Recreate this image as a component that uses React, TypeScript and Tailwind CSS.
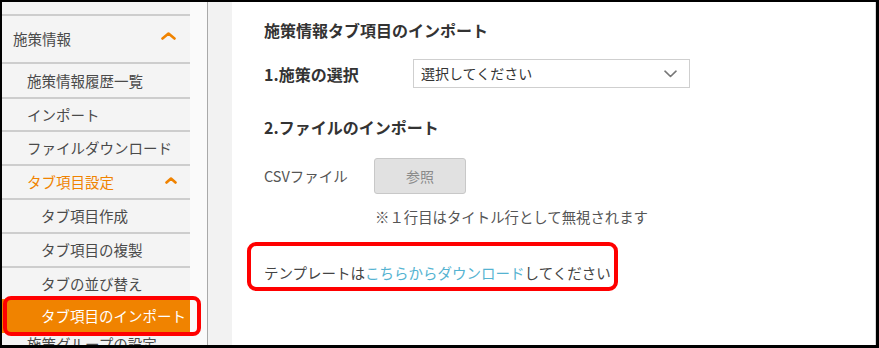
import React from "react";

const font = { fontFamily: '"Noto Sans CJK JP", "Noto Sans", sans-serif' };

function Chevron({ w, h }: { w: number; h: number }) {
  return (
    <svg width={w} height={h} viewBox={`0 0 ${w} ${h}`} fill="none">
      <polyline
        points={`1.5,${h - 1.5} ${w / 2},1.5 ${w - 1.5},${h - 1.5}`}
        stroke="#f08300"
        strokeWidth="2.6"
        strokeLinecap="round"
        strokeLinejoin="round"
      />
    </svg>
  );
}

export default function App() {
  return (
    <div
      className="relative box-border w-[879px] h-[348px] overflow-hidden border-black border-t-2 border-l-2 border-r-[3px] border-b-[3px] bg-white"
      style={font}
    >
      <div className="flex h-full">
        {/* Sidebar */}
        <div className="w-[188px] shrink-0 bg-[#f4f4f4] flex flex-col text-[14.5px] text-[#4a4a4a]">
          <div className="h-[14px] shrink-0 box-border border-b-2 border-[#cdcdcd]" />
          <div className="h-[48px] shrink-0 box-border border-b-2 border-[#cdcdcd] flex items-center justify-between pl-[11px] pr-[14px]">
            <span className="leading-none">施策情報</span>
            <span className="-mt-[7px]">
              <Chevron w={15} h={8} />
            </span>
          </div>
          <div className="h-[35px] shrink-0 box-border border-b-2 border-[#cdcdcd] flex items-center pl-[25px]">
            施策情報履歴一覧
          </div>
          <div className="h-[33px] shrink-0 box-border border-b-2 border-[#cdcdcd] flex items-center pl-[25px]">
            インポート
          </div>
          <div className="h-[34px] shrink-0 box-border border-b-2 border-[#cdcdcd] flex items-center pl-[25px]">
            ファイルダウンロード
          </div>
          <div className="h-[34px] shrink-0 box-border border-b-2 border-[#cdcdcd] flex items-center justify-between pl-[25px] pr-[13px] text-[#f08300]">
            <span>タブ項目設定</span>
            <span className="-mt-[4px]">
              <Chevron w={12} h={7} />
            </span>
          </div>
          <div className="h-[34px] shrink-0 box-border border-b-2 border-[#cdcdcd] flex items-center pl-[39px]">
            タブ項目作成
          </div>
          <div className="h-[34px] shrink-0 box-border border-b-2 border-[#cdcdcd] flex items-center pl-[39px]">
            タブ項目の複製
          </div>
          <div className="h-[31px] shrink-0 box-border flex items-center pl-[39px]">
            タブの並び替え
          </div>
          <div className="h-[34px] shrink-0 flex items-center pl-[39px] bg-[#f08300] text-white">
            タブ項目のインポート
          </div>
          <div className="h-[34px] shrink-0 flex items-start pl-[25px] pt-[1px] leading-[20px]">
            施策グループの設定
          </div>
        </div>
        <div className="w-[17px] shrink-0 bg-[#fafafa]" />
        <div className="w-px shrink-0 bg-[#a9a9a9]" />
        <div className="w-[24px] shrink-0 bg-[#f2f2f2]" />

        {/* Main */}
        <div className="flex-1 bg-white border-r border-[#d8d8d8] pl-[32px] pt-[16px] flex flex-col">
          <div className="h-[24px] flex items-center text-[16px] font-bold text-[#333]">
            施策情報タブ項目のインポート
          </div>
          <div className="mt-[17px] h-[29px] flex items-center">
            <div className="w-[149px] text-[16px] font-bold text-[#333]">1.施策の選択</div>
            <div className="w-[277px] h-[29px] box-border border border-[#cfcfcf] bg-white flex items-center justify-between pl-[7px] pr-[12px] text-[14px] text-[#333]">
              <span>選択してください</span>
              <svg width="13" height="8" viewBox="0 0 13 8" fill="none">
                <polyline
                  points="1,1.2 6.5,6.5 12,1.2"
                  stroke="#777"
                  strokeWidth="1.6"
                  strokeLinecap="round"
                  strokeLinejoin="round"
                />
              </svg>
            </div>
          </div>
          <div className="mt-[27px] h-[24px] flex items-center text-[16px] font-bold text-[#333]">
            2.ファイルのインポート
          </div>
          <div className="mt-[19px] h-[36px] flex items-center">
            <div className="w-[110px] text-[14.5px] text-[#555]">CSVファイル</div>
            <div className="w-[92px] h-[36px] box-border border border-[#c8c8c8] rounded-[3px] bg-[#e1e1e1] flex items-center justify-center text-[14px] text-[#8a8a8a]">
              参照
            </div>
          </div>
          <div className="mt-[13px] h-[20px] flex items-center pl-[111px] text-[14.4px] text-[#555]">
            ※１行目はタイトル行として無視されます
          </div>
          <div className="mt-[15px] -ml-[17px] w-[371px] h-[49px] box-border border-4 border-[#ff0000] rounded-[9px] pl-[13px] pt-[17px]">
            <div className="h-[20px] flex items-center text-[14.5px] text-[#444] whitespace-nowrap">
              テンプレートは<span className="text-[#55b3d1]">こちらからダウンロード</span>してください
            </div>
          </div>
        </div>
      </div>

      {/* Red highlight around active sidebar item */}
      <div className="absolute left-[1px] top-[294px] w-[198px] h-[40px] box-border border-4 border-[#ff0000] rounded-[8px] pointer-events-none" />
    </div>
  );
}
